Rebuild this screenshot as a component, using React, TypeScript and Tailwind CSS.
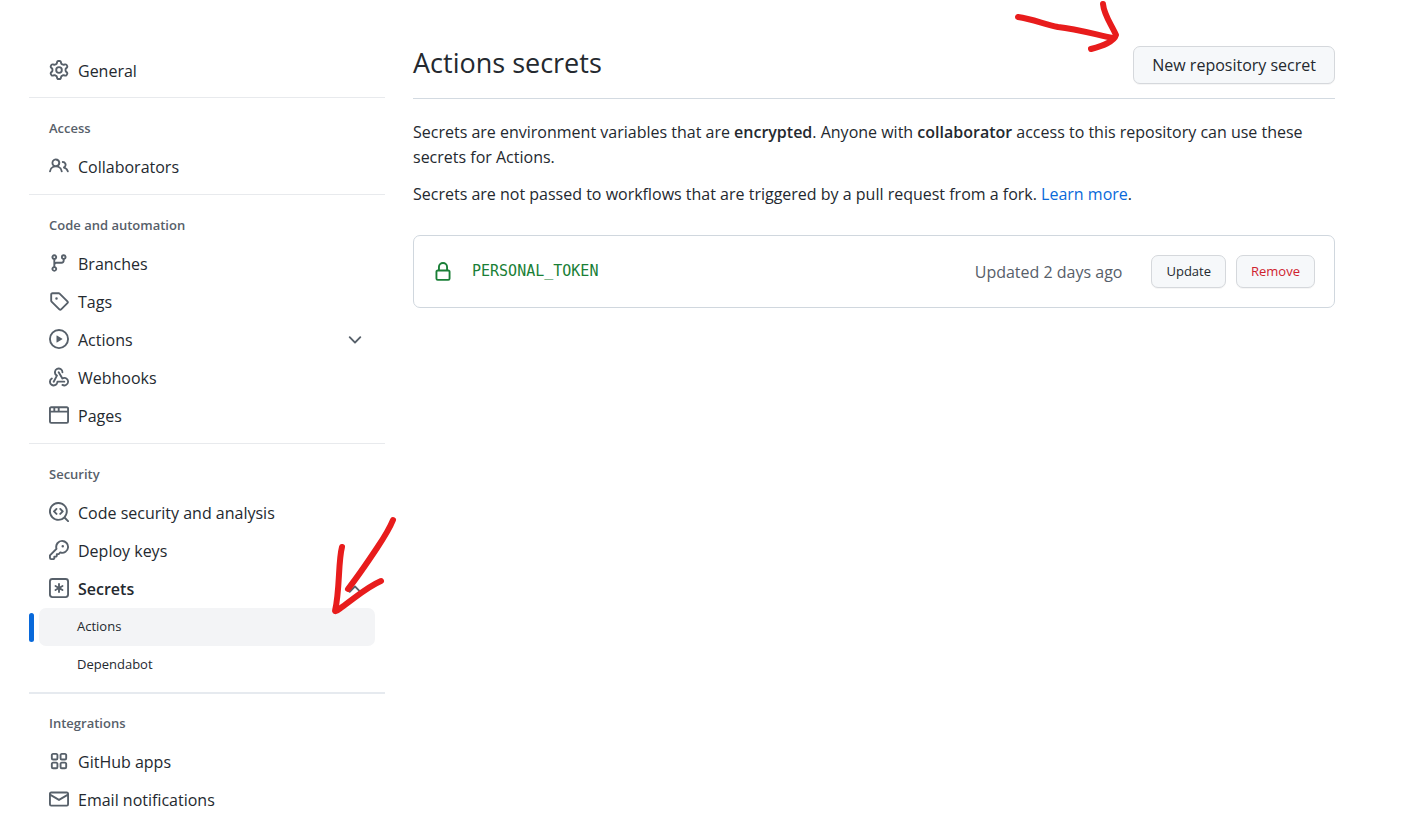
import type { ReactNode } from "react";

const icons = {
  gear: [
    "M8 0a8.2 8.2 0 0 1 .701.031C9.444.095 9.99.645 10.16 1.29l.288 1.107c.018.066.079.158.212.224.231.114.454.243.668.386.123.082.233.09.299.071l1.103-.303c.644-.176 1.392.021 1.82.63.27.385.506.792.704 1.218.315.675.111 1.422-.364 1.891l-.814.806c-.049.048-.098.147-.088.294.016.257.016.515 0 .772-.01.147.038.246.088.294l.814.806c.475.469.679 1.216.364 1.891a7.977 7.977 0 0 1-.704 1.217c-.428.61-1.176.807-1.82.63l-1.102-.302c-.067-.019-.177-.011-.3.071a5.909 5.909 0 0 1-.668.386c-.133.066-.194.158-.211.224l-.29 1.106c-.168.646-.715 1.196-1.458 1.26a8.006 8.006 0 0 1-1.402 0c-.743-.064-1.289-.614-1.458-1.26l-.289-1.106c-.018-.066-.079-.158-.212-.224a5.738 5.738 0 0 1-.668-.386c-.123-.082-.233-.09-.299-.071l-1.103.303c-.644.176-1.392-.021-1.82-.63a8.12 8.12 0 0 1-.704-1.218c-.315-.675-.111-1.422.363-1.891l.815-.806c.05-.048.098-.147.088-.294a6.214 6.214 0 0 1 0-.772c.01-.147-.038-.246-.088-.294l-.815-.806C.635 6.045.431 5.298.746 4.623a7.92 7.92 0 0 1 .704-1.217c.428-.61 1.176-.807 1.82-.63l1.102.302c.067.019.177.011.3-.071.214-.143.437-.272.668-.386.133-.066.194-.158.211-.224l.29-1.106C6.009.645 6.556.095 7.299.03 7.53.01 7.764 0 8 0Zm-.571 1.525c-.036.003-.108.036-.137.146l-.289 1.105c-.147.561-.549.967-.998 1.189-.173.086-.34.183-.5.29-.417.278-.97.423-1.529.27l-1.103-.303c-.109-.03-.175.016-.195.045-.22.312-.412.644-.573.99-.014.031-.021.11.059.19l.815.806c.411.406.562.957.53 1.456a4.709 4.709 0 0 0 0 .582c.032.499-.119 1.05-.53 1.456l-.815.806c-.081.08-.073.159-.059.19.162.346.353.677.573.989.02.03.085.076.195.046l1.102-.303c.56-.153 1.113-.008 1.53.27.161.107.328.204.501.29.447.222.85.629.997 1.189l.289 1.105c.029.109.101.143.137.146a6.6 6.6 0 0 0 1.142 0c.036-.003.108-.036.137-.146l.289-1.105c.147-.561.549-.967.998-1.189.173-.086.34-.183.5-.29.417-.278.97-.423 1.529-.27l1.103.303c.109.029.175-.016.195-.045.22-.313.411-.644.573-.99.014-.031.021-.11-.059-.19l-.815-.806c-.411-.406-.562-.957-.53-1.456a4.709 4.709 0 0 0 0-.582c-.032-.499.119-1.05.53-1.456l.815-.806c.081-.08.073-.159.059-.19a6.464 6.464 0 0 0-.573-.989c-.02-.03-.085-.076-.195-.046l-1.102.303c-.56.153-1.113.008-1.53-.27a4.44 4.44 0 0 0-.501-.29c-.447-.222-.85-.629-.997-1.189l-.289-1.105c-.029-.11-.101-.143-.137-.146a6.6 6.6 0 0 0-1.142 0ZM11 8a3 3 0 1 1-6 0 3 3 0 0 1 6 0ZM9.5 8a1.5 1.5 0 1 0-3.001.001A1.5 1.5 0 0 0 9.5 8Z",
  ],
  people: [
    "M2 5.5a3.5 3.5 0 1 1 5.898 2.549 5.508 5.508 0 0 1 3.034 4.084.75.75 0 1 1-1.482.235 4 4 0 0 0-7.9 0 .75.75 0 0 1-1.482-.236A5.507 5.507 0 0 1 3.102 8.05 3.493 3.493 0 0 1 2 5.5ZM11 4a3.001 3.001 0 0 1 2.22 5.018 5.01 5.01 0 0 1 2.56 3.012.749.749 0 0 1-.885.954.752.752 0 0 1-.549-.514 3.507 3.507 0 0 0-2.522-2.372.75.75 0 0 1-.574-.73v-.352a.75.75 0 0 1 .416-.672A1.5 1.5 0 0 0 11 5.5.75.75 0 0 1 11 4Zm-5.5-.5a2 2 0 1 0-.001 3.999A2 2 0 0 0 5.5 3.5Z",
  ],
  branch: [
    "M9.5 3.25a2.25 2.25 0 1 1 3 2.122V6A2.5 2.5 0 0 1 10 8.5H6a1 1 0 0 0-1 1v1.128a2.251 2.251 0 1 1-1.5 0V5.372a2.25 2.25 0 1 1 1.5 0v1.836A2.493 2.493 0 0 1 6 7h4a1 1 0 0 0 1-1v-.628A2.25 2.25 0 0 1 9.5 3.25Zm-6 0a.75.75 0 1 0 1.5 0 .75.75 0 0 0-1.5 0Zm8.25-.75a.75.75 0 1 0 0 1.5.75.75 0 0 0 0-1.5ZM4.25 12a.75.75 0 1 0 0 1.5.75.75 0 0 0 0-1.5Z",
  ],
  tag: [
    "M1 7.775V2.75C1 1.784 1.784 1 2.75 1h5.025c.464 0 .91.184 1.238.513l6.25 6.25a1.75 1.75 0 0 1 0 2.474l-5.026 5.026a1.75 1.75 0 0 1-2.474 0l-6.25-6.25A1.752 1.752 0 0 1 1 7.775Zm1.5 0c0 .066.026.13.073.177l6.25 6.25a.25.25 0 0 0 .354 0l5.025-5.025a.25.25 0 0 0 0-.354l-6.25-6.25a.25.25 0 0 0-.177-.073H2.75a.25.25 0 0 0-.25.25ZM6 5a1 1 0 1 1 0 2 1 1 0 0 1 0-2Z",
  ],
  play: [
    "M8 0a8 8 0 1 1 0 16A8 8 0 0 1 8 0ZM1.5 8a6.5 6.5 0 1 0 13 0 6.5 6.5 0 0 0-13 0Zm4.879-2.773 4.264 2.559a.25.25 0 0 1 0 .428l-4.264 2.559A.25.25 0 0 1 6 10.559V5.442a.25.25 0 0 1 .379-.215Z",
  ],
  webhook: [
    "M5.5 4.25a2.25 2.25 0 0 1 4.5 0 .75.75 0 0 0 1.5 0 3.75 3.75 0 1 0-6.14 2.889l-2.272 4.258a.75.75 0 0 0 1.324.706L7 7.25a.75.75 0 0 0-.309-1.015A2.25 2.25 0 0 1 5.5 4.25Z",
    "M7.364 3.607a.75.75 0 0 1 1.03.257l2.608 4.349a3.75 3.75 0 1 1-.628 6.785.75.75 0 0 1 .752-1.299 2.25 2.25 0 1 0-.033-3.88.75.75 0 0 1-1.03-.256L7.107 4.636a.75.75 0 0 1 .257-1.03Z",
    "M2.9 8.776A.75.75 0 0 1 2.625 9.8 2.25 2.25 0 1 0 6 11.75a.75.75 0 0 1 .75-.751h5.5a.75.75 0 0 1 0 1.5H7.425a3.751 3.751 0 1 1-5.55-3.998.75.75 0 0 1 1.024.274Z",
  ],
  browser: [
    "M0 2.75C0 1.784.784 1 1.75 1h12.5c.966 0 1.75.784 1.75 1.75v10.5A1.75 1.75 0 0 1 14.25 15H1.75A1.75 1.75 0 0 1 0 13.25ZM14.5 6h-13v7.25c0 .138.112.25.25.25h12.5a.25.25 0 0 0 .25-.25Zm-6-3.5v2h6V2.75a.25.25 0 0 0-.25-.25ZM5 2.5v2h2v-2Zm-3.25 0a.25.25 0 0 0-.25.25V4.5h2v-2Z",
  ],
  codescan: [
    "M8.47 4.97a.75.75 0 0 0 0 1.06L9.94 7.5 8.47 8.97a.75.75 0 1 0 1.06 1.06l2-2a.75.75 0 0 0 0-1.06l-2-2a.75.75 0 0 0-1.06 0ZM6.53 6.03a.75.75 0 0 0-1.06-1.06l-2 2a.75.75 0 0 0 0 1.06l2 2a.75.75 0 1 0 1.06-1.06L5.06 7.5l1.47-1.47Z",
    "M12.246 13.307a7.5 7.5 0 1 1 1.06-1.06l2.474 2.473a.75.75 0 1 1-1.06 1.06l-2.474-2.473ZM1.5 7.5a6 6 0 1 0 12 0 6 6 0 0 0-12 0Z",
  ],
  key: [
    "M10.5 0a5.499 5.499 0 1 1-1.288 10.848l-.932.932a.749.749 0 0 1-.53.22H7v.75a.749.749 0 0 1-.22.53l-.5.5a.749.749 0 0 1-.53.22H5v.75a.749.749 0 0 1-.22.53l-.5.5a.749.749 0 0 1-.53.22h-2A1.75 1.75 0 0 1 0 14.25v-2c0-.199.079-.389.22-.53l4.932-4.932A5.5 5.5 0 0 1 10.5 0Zm-4 5.5c-.001.431.069.86.205 1.269a.75.75 0 0 1-.181.768L1.5 12.56v1.69c0 .138.112.25.25.25h1.69l.06-.06v-1.19a.75.75 0 0 1 .75-.75h1.19l.06-.06v-1.19a.75.75 0 0 1 .75-.75h1.19l1.023-1.025a.75.75 0 0 1 .768-.18A4 4 0 1 0 6.5 5.5ZM11 6a1 1 0 1 1 0-2 1 1 0 0 1 0 2Z",
  ],
  asterisk: [
    "M0 2.75A2.75 2.75 0 0 1 2.75 0h10.5A2.75 2.75 0 0 1 16 2.75v10.5A2.75 2.75 0 0 1 13.25 16H2.75A2.75 2.75 0 0 1 0 13.25ZM2.75 1.5c-.69 0-1.25.56-1.25 1.25v10.5c0 .69.56 1.25 1.25 1.25h10.5c.69 0 1.25-.56 1.25-1.25V2.75c0-.69-.56-1.25-1.25-1.25Z",
    "M8 4a.75.75 0 0 1 .75.75V6.7l1.69-.975a.75.75 0 0 1 .75 1.3L9.5 8l1.69.976a.75.75 0 0 1-.75 1.298L8.75 9.3v1.951a.75.75 0 0 1-1.5 0V9.299l-1.69.976a.75.75 0 0 1-.75-1.3L6.5 8l-1.69-.975a.75.75 0 0 1 .75-1.3l1.69.976V4.75A.75.75 0 0 1 8 4Z",
  ],
  apps: [
    "M3.25 1.5h2.5c.966 0 1.75.784 1.75 1.75v2.5A1.75 1.75 0 0 1 5.75 7.5h-2.5A1.75 1.75 0 0 1 1.5 5.75v-2.5c0-.966.784-1.75 1.75-1.75ZM3.25 3a.25.25 0 0 0-.25.25v2.5c0 .138.112.25.25.25h2.5A.25.25 0 0 0 6 5.75v-2.5A.25.25 0 0 0 5.75 3Z",
    "M10.25 1.5h2.5c.966 0 1.75.784 1.75 1.75v2.5a1.75 1.75 0 0 1-1.75 1.75h-2.5A1.75 1.75 0 0 1 8.5 5.75v-2.5c0-.966.784-1.75 1.75-1.75ZM10.25 3a.25.25 0 0 0-.25.25v2.5c0 .138.112.25.25.25h2.5a.25.25 0 0 0 .25-.25v-2.5a.25.25 0 0 0-.25-.25Z",
    "M3.25 8.5h2.5c.966 0 1.75.784 1.75 1.75v2.5a1.75 1.75 0 0 1-1.75 1.75h-2.5a1.75 1.75 0 0 1-1.75-1.75v-2.5c0-.966.784-1.75 1.75-1.75ZM3.25 10a.25.25 0 0 0-.25.25v2.5c0 .138.112.25.25.25h2.5a.25.25 0 0 0 .25-.25v-2.5a.25.25 0 0 0-.25-.25Z",
    "M10.25 8.5h2.5c.966 0 1.75.784 1.75 1.75v2.5a1.75 1.75 0 0 1-1.75 1.75h-2.5a1.75 1.75 0 0 1-1.75-1.75v-2.5c0-.966.784-1.75 1.75-1.75ZM10.25 10a.25.25 0 0 0-.25.25v2.5c0 .138.112.25.25.25h2.5a.25.25 0 0 0 .25-.25v-2.5a.25.25 0 0 0-.25-.25Z",
  ],
  mail: [
    "M1.75 2h12.5c.966 0 1.75.784 1.75 1.75v8.5A1.75 1.75 0 0 1 14.25 14H1.75A1.75 1.75 0 0 1 0 12.25v-8.5C0 2.784.784 2 1.75 2ZM1.5 12.251c0 .138.112.25.25.25h12.5a.25.25 0 0 0 .25-.25V5.809L8.38 9.397a.75.75 0 0 1-.76 0L1.5 5.809v6.442Zm13-8.181v-.32a.25.25 0 0 0-.25-.25H1.75a.25.25 0 0 0-.25.25v.32L8 7.88Z",
  ],
  lock: [
    "M4 4a4 4 0 0 1 8 0v2h.25c.966 0 1.75.784 1.75 1.75v5.5A1.75 1.75 0 0 1 12.25 15h-8.5A1.75 1.75 0 0 1 2 13.25v-5.5C2 6.784 2.784 6 3.75 6H4Zm8.25 3.5h-8.5a.25.25 0 0 0-.25.25v5.5c0 .138.112.25.25.25h8.5a.25.25 0 0 0 .25-.25v-5.5a.25.25 0 0 0-.25-.25ZM10.5 6V4a2.5 2.5 0 1 0-5 0v2Z",
  ],
  chevron: [
    "M12.78 5.22a.749.749 0 0 1 0 1.06l-4.25 4.25a.749.749 0 0 1-1.06 0L3.22 6.28a.749.749 0 1 1 1.06-1.06L8 8.939l3.72-3.719a.749.749 0 0 1 1.06 0Z",
  ],
};

type IconName = keyof typeof icons;

function Icon({ name, className }: { name: IconName; className: string }) {
  return (
    <svg viewBox="0 0 16 16" fill="currentColor" aria-hidden="true" className={className}>
      {icons[name].map((d) => (
        <path key={d} d={d} />
      ))}
    </svg>
  );
}

const row = "flex h-[38px] w-full items-center gap-[9px] px-5 text-left";

function NavLink({ icon, children }: { icon: IconName; children: ReactNode }) {
  return (
    <li>
      <a href="#" className={row}>
        <Icon name={icon} className="mb-0.5 size-5 shrink-0 text-[#57606a]" />
        {children}
      </a>
    </li>
  );
}

function Section({ title, heavy, children }: { title: string; heavy?: boolean; children: ReactNode }) {
  return (
    <section className={heavy ? "border-t-2 border-[#e6eaef] pt-[11px] pb-2" : "border-t border-[#e8eaed] pt-3 pb-2"}>
      <h3 className="flex h-[38px] items-center px-5 text-[13px] font-semibold text-[#57606a]">{title}</h3>
      <ul>{children}</ul>
    </section>
  );
}

const smallButton =
  "h-[33px] rounded-[7px] border border-[#d5d8dc] bg-[#f6f8fa] px-3.5 text-[13px] shadow-[0_1px_0_rgba(27,31,36,0.04)]";

export default function App() {
  return (
    <div className="flex min-h-screen items-start gap-7 overflow-hidden bg-white pr-[83px] pl-[29px] font-['Open_Sans','Noto_Sans',sans-serif] text-[16px] text-[#24292f]">
      <nav aria-label="Settings" className="w-[356px] shrink-0 pt-[52px]">
        <ul className="pb-[7px]">
          <NavLink icon="gear">General</NavLink>
        </ul>

        <Section title="Access">
          <NavLink icon="people">Collaborators</NavLink>
        </Section>

        <Section title="Code and automation">
          <NavLink icon="branch">Branches</NavLink>
          <NavLink icon="tag">Tags</NavLink>
          <li>
            <button type="button" aria-expanded="false" className={row}>
              <Icon name="play" className="mb-0.5 size-5 shrink-0 text-[#57606a]" />
              Actions
              <Icon name="chevron" className="ml-auto size-5 text-[#57606a]" />
            </button>
          </li>
          <NavLink icon="webhook">Webhooks</NavLink>
          <NavLink icon="browser">Pages</NavLink>
        </Section>

        <Section title="Security">
          <NavLink icon="codescan">Code security and analysis</NavLink>
          <NavLink icon="key">Deploy keys</NavLink>
          <li className="relative">
            <button type="button" aria-expanded="true" className={row}>
              <Icon name="asterisk" className="mb-0.5 size-5 shrink-0 text-[#57606a]" />
              <span className="font-semibold">Secrets</span>
              <Icon name="chevron" className="ml-auto size-5 rotate-180 text-[#57606a]" />
            </button>
            <svg
              viewBox="0 0 76 110"
              fill="none"
              stroke="#e81c1c"
              strokeWidth="6"
              strokeLinecap="round"
              strokeLinejoin="round"
              aria-hidden="true"
              className="pointer-events-none absolute -top-[60px] -right-[17px] z-10 h-[110px] w-[76px]"
            >
              <path d="M67 10C63 20 57 29 51 38C41 53 33 65 22 79" />
              <path d="M16 37C12 52 14 80 9 101C11 102 13 99 16 97C30 87 41 77 55 71" />
            </svg>
            <ul>
              <li className="flex items-center gap-[5px] pr-2.5">
                <span className="h-[29px] w-[5px] rounded-[3px] bg-[#0969da]" />
                <a href="#" aria-current="page" className="flex h-[38px] flex-1 items-center rounded-[7px] bg-[#f3f4f6] pl-[38px] text-[13px]">
                  Actions
                </a>
              </li>
              <li>
                <a href="#" className="flex h-[38px] items-center pl-12 text-[13px]">
                  Dependabot
                </a>
              </li>
            </ul>
          </li>
        </Section>

        <Section title="Integrations" heavy>
          <NavLink icon="apps">GitHub apps</NavLink>
          <NavLink icon="mail">Email notifications</NavLink>
        </Section>
      </nav>

      <main className="min-w-0 flex-1 pt-[46px]">
        <header className="flex items-start justify-between border-b border-[#d3dae1] pb-3.5">
          <h1 className="text-[27px] leading-[34px]">Actions secrets</h1>
          <div className="relative">
            <svg
              viewBox="0 0 110 56"
              fill="none"
              stroke="#e81c1c"
              strokeWidth="6"
              strokeLinecap="round"
              strokeLinejoin="round"
              aria-hidden="true"
              className="pointer-events-none absolute -top-[46px] right-full mr-[11px] h-14 w-[110px]"
            >
              <path d="M6 17C20 19 32 24 46 27C64 29 82 34 101 38" />
              <path d="M91 4C92 15 99 24 104 35C102 42 90 46 79 49" />
            </svg>
            <button
              type="button"
              className="h-[38px] rounded-[7px] border border-[#d5d8dc] bg-[#f6f8fa] px-[18px] shadow-[0_1px_0_rgba(27,31,36,0.04)]"
            >
              New repository secret
            </button>
          </div>
        </header>

        <div className="mt-[21px] space-y-3 leading-[25px]">
          <p>
            Secrets are environment variables that are <strong className="font-semibold">encrypted</strong>. Anyone with{" "}
            <strong className="font-semibold">collaborator</strong> access to this repository can use these secrets for Actions.
          </p>
          <p>
            Secrets are not passed to workflows that are triggered by a pull request from a fork.{" "}
            <a href="#" className="text-[#0969da]">
              Learn more
            </a>
            .
          </p>
        </div>

        <div className="mt-7 flex items-center rounded-[7px] border border-[#d0d7de] px-[19px] py-[19px]">
          <Icon name="lock" className="size-5 shrink-0 text-[#1a7f37]" />
          <code className="ml-[19px] font-['DejaVu_Sans_Mono',monospace] text-[15px] text-[#1a7f37]">PERSONAL_TOKEN</code>
          <span className="mr-[29px] ml-auto text-[#57606a]">Updated 2 days ago</span>
          <div className="flex gap-2.5">
            <button type="button" className={smallButton}>
              Update
            </button>
            <button type="button" className={`${smallButton} text-[#cf222e]`}>
              Remove
            </button>
          </div>
        </div>
      </main>
    </div>
  );
}
